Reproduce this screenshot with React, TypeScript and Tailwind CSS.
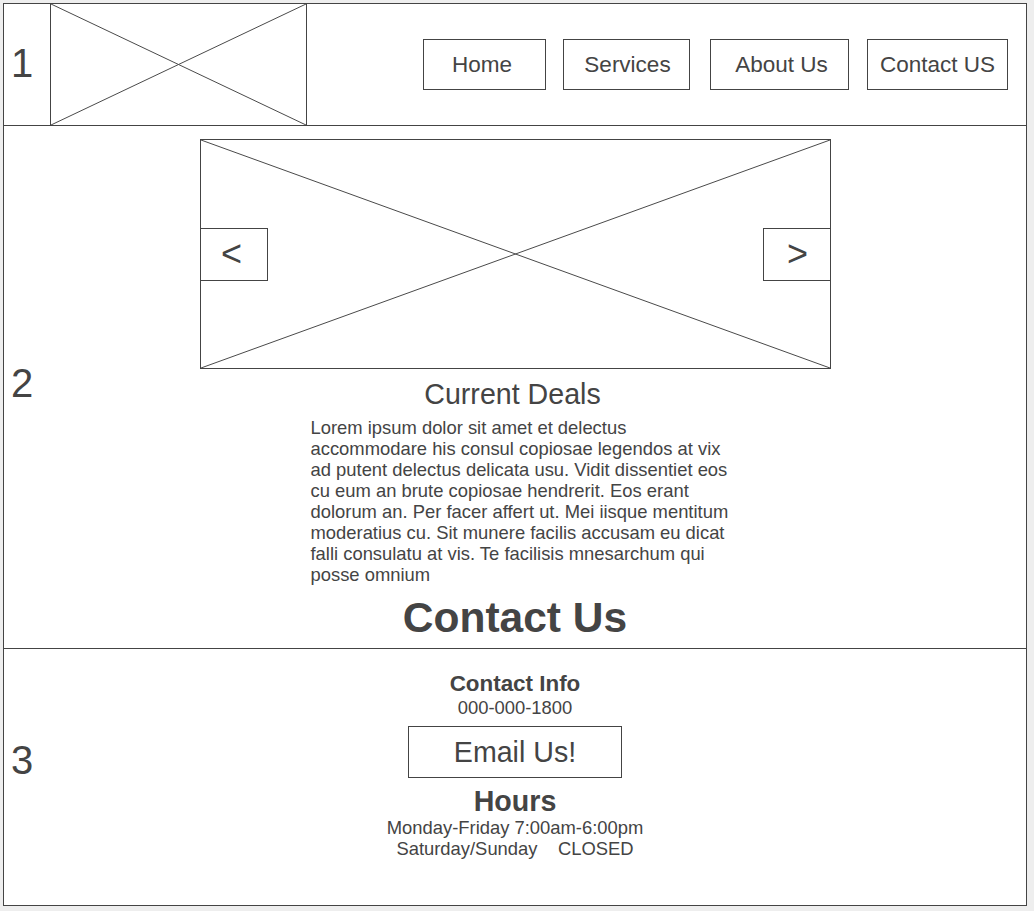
const navItems = [
  { label: "Home", className: "w-[123px] pr-[5px]" },
  { label: "Services", className: "ml-[17px] w-[127px] pl-[2px]" },
  { label: "About Us", className: "ml-[20px] w-[139px] pl-[4px]" },
  { label: "Contact US", className: "ml-[18px] w-[141px]" },
];

const dealLines = [
  "Lorem ipsum dolor sit amet et delectus",
  "accommodare his consul copiosae legendos at vix",
  "ad putent delectus delicata usu. Vidit dissentiet eos",
  "cu eum an brute copiosae hendrerit. Eos erant",
  "dolorum an. Per facer affert ut. Mei iisque mentitum",
  "moderatius cu. Sit munere facilis accusam eu dicat",
  "falli consulatu at vis. Te facilisis mnesarchum qui",
  "posse omnium",
];

function Placeholder() {
  return (
    <svg className="absolute inset-0 h-full w-full" preserveAspectRatio="none" viewBox="0 0 100 100">
      <line x1="0" y1="0" x2="100" y2="100" stroke="#4a4a4a" strokeWidth="1" vectorEffect="non-scaling-stroke" />
      <line x1="0" y1="100" x2="100" y2="0" stroke="#4a4a4a" strokeWidth="1" vectorEffect="non-scaling-stroke" />
    </svg>
  );
}

function SectionNumber({ n, offset }: { n: string; offset: string }) {
  return (
    <div className={`w-[46px] shrink-0 pl-[7px] text-[40px] leading-[40px] ${offset}`}>{n}</div>
  );
}

export default function App() {
  return (
    <div
      className="h-[911px] w-[1034px] bg-[#eeeeee] pl-[3px] pt-[3px] text-[#444444]"
      style={{ fontFamily: '"Liberation Sans", Arial, sans-serif' }}
    >
      <div className="flex h-[903px] w-[1024px] flex-col border border-[#444444] bg-white">
        {/* 1: header */}
        <header className="flex h-[122px] shrink-0 border-b border-[#444444]">
          <SectionNumber n="1" offset="pt-[39px]" />
          <div className="relative h-full w-[257px] shrink-0 border-x border-[#444444]">
            <Placeholder />
          </div>
          <nav className="ml-auto flex items-center pr-[18px]">
            {navItems.map((item) => (
              <button
                key={item.label}
                className={`flex h-[51px] items-center justify-center border border-[#444444] text-[22.5px] ${item.className}`}
                type="button"
              >
                {item.label}
              </button>
            ))}
          </nav>
        </header>

        {/* 2: deals */}
        <section className="flex h-[523px] shrink-0 border-b border-[#444444]">
          <SectionNumber n="2" offset="pt-[237px]" />
          <div className="flex flex-1 flex-col items-center pr-[46px]">
            <div className="relative mt-[13px] flex h-[230px] w-[631px] items-center justify-between border border-[#444444]">
              <Placeholder />
              <button className="relative -ml-px flex h-[53px] w-[68px] items-center justify-center border border-[#444444] bg-white pr-[4px] text-[36px]" type="button">
                &lt;
              </button>
              <button className="relative -mr-px flex h-[53px] w-[68px] items-center justify-center border border-[#444444] bg-white pl-[2px] text-[36px]" type="button">
                &gt;
              </button>
            </div>
            <div className="mt-[9px] mr-[5px] w-[404px]">
              <h2 className="text-center text-[28.6px] leading-[32px]">Current Deals</h2>
              <p className="mt-[7px] whitespace-nowrap text-[18.4px] leading-[21px]">
                {dealLines.map((line) => <span className="block" key={line}>{line}</span>)}
              </p>
            </div>
            <h2 className="mt-[9px] text-[42.5px] font-bold leading-[48px]">Contact Us</h2>
          </div>
        </section>

        {/* 3: contact */}
        <section className="flex flex-1">
          <SectionNumber n="3" offset="pt-[91px]" />
          <div className="flex flex-1 flex-col items-center pr-[46px] pt-[22px] text-center">
            <h3 className="text-[22.4px] font-bold leading-[26px]">Contact Info</h3>
            <p className="text-[18.4px] leading-[21px]">000-000-1800</p>
            <button className="mt-[8px] h-[52px] w-[214px] border border-[#444444] text-[28.6px]" type="button">
              Email Us!
            </button>
            <h3 className="mt-[8px] text-[28.6px] font-bold leading-[31px]">Hours</h3>
            <p className="text-[18.4px] leading-[21px]">Monday-Friday 7:00am-6:00pm</p>
            <p className="whitespace-pre text-[18.4px] leading-[21px]">{"Saturday/Sunday    CLOSED"}</p>
          </div>
        </section>
      </div>
    </div>
  );
}
